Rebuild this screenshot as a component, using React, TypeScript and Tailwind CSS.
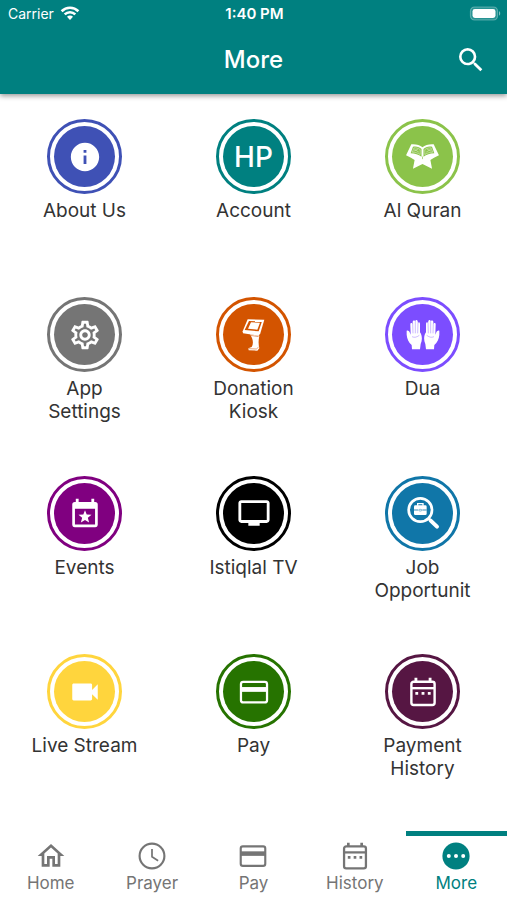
import * as React from "react"
import clsx from "clsx"
import { MdInfo, MdOutlineHome, MdOutlineSettings, MdOutlineTv, MdSearch, MdVideocam } from "react-icons/md"

interface MenuItem {
  id: string
  label: string
  ring: string
  fill: string
  icon: React.ReactNode
}

interface TabItem {
  id: string
  label: string
  icon: React.ReactNode
}

const WifiIcon = () => (
  <svg className="h-4 w-5" viewBox="0 0 20 16" fill="none" stroke="currentColor" strokeWidth="2.6">
    <path d="M1.6 5.2a12 12 0 0 1 16.800 0" />
    <path d="M4.700 8.400a7.600 7.600 0 0 1 10.600 0" />
    <path d="M10 14l-3-3.200a4.200 4.200 0 0 1 6 0z" fill="currentColor" stroke="none" />
  </svg>
)

const BatteryIcon = () => (
  <svg className="h-4 w-8" viewBox="0 0 32 16">
    <rect x="1.5" y="1" width="27" height="13" rx="4" fill="#fff" fillOpacity=".15" stroke="#fff" strokeOpacity=".3" strokeWidth="1.2" />
    <rect x="3.5" y="3" width="23" height="9" rx="2.4" fill="#fff" />
    <path d="M30 5.3c1.6.4 1.6 4 0 4.4z" fill="#fff" fillOpacity=".5" />
  </svg>
)

const QuranIcon = () => (
  <svg className="h-[25px] w-[33px]" viewBox="0 0 100 76">
    <path
      fill="#fff"
      d="M16 1C30 0 42 3 50 10C58 3 70 0 84 1L100 34L85 42L74 49L79 75L50 61L21 75L26 49L15 42L0 34Z"
    />
    <path fill="#8bc34a" d="M21 8C32 6 41 9 47 15V39C38 32 27 28 14 28Z" />
    <path fill="#8bc34a" d="M79 8C68 6 59 9 53 15V39C62 32 73 28 86 28Z" />
    <g fill="none" stroke="#fff" strokeWidth="2" strokeOpacity=".6">
      <path d="M24 12C31 11 37 13 43 17V32C36 27 28 25 19 25Z" />
      <path d="M76 12C69 11 63 13 57 17V32C64 27 72 25 81 25Z" />
      <path d="M25 16l14 9M23 22l14-7M75 16l-14 9M77 22l-14-7" />
    </g>
    <path fill="none" stroke="#8bc34a" strokeWidth="2" d="M50 38v8" />
  </svg>
)

const KioskIcon = () => (
  <svg className="h-8 w-6" viewBox="0 0 72 96">
    <path fill="#fff" d="M17 1L67 2L55 43L50 50L3 43L2 37Z" />
    <path fill="#d35400" d="M21 6L60 7L50 37L8 33Z" />
    <path fill="#fff" d="M27 10L54 11L46 32L18 29Z" />
    <path
      fill="#fff"
      d="M24 46L52 50C49 64 49 76 52 88L46 95L20 94L19 88L29 84C35 74 34 61 24 46Z"
    />
    <path fill="none" stroke="#d35400" strokeWidth="1.6" d="M25 49L50 53M20 89L43 90L50 84" />
  </svg>
)

const Hand = () => (
  <>
    <path
      fill="#fff"
      d="M2 32C5 30 9 32 11 37L14 44L13 13C13 8 19 8 20 13L20 5C21 0 27 0 28 5L28 3C29-1 34-1 35 4L36 9C38 5 42 7 42 12L42 37C48 45 50 59 44 72L42 88H18L17 75C8 68 3 56 2 44Z"
    />
    <path
      fill="none"
      stroke="#7c4dff"
      strokeOpacity=".7"
      strokeWidth="1.6"
      d="M20 10L21 40M28 4V40M36 8L35 40M18 50C26 54 33 51 40 46"
    />
  </>
)

const HandsIcon = () => (
  <svg className="h-[30px] w-[34px]" viewBox="0 0 102 90">
    <Hand />
    <g transform="matrix(-1 0 0 1 102 0)">
      <Hand />
    </g>
  </svg>
)

const CalendarStarIcon = () => (
  <svg className="size-[34px]" viewBox="0 0 24 24" fill="currentColor">
    <path
      fillRule="evenodd"
      d="M5.500 2h2v2.200h9V2h2v2.200h.700A1.800 1.800 0 0 1 21 6v14.200a1.800 1.800 0 0 1-1.800 1.800H4.800A1.800 1.800 0 0 1 3 20.200V6a1.800 1.800 0 0 1 1.800-1.800h.700zM4.900 9v11.200h14.200V9z"
    />
    <path d="M12 10l1.200 3.100 3.400.2-2.600 2.100.9 3.300-2.900-1.800-2.900 1.800.9-3.300-2.600-2.100 3.400-.2z" />
  </svg>
)

const CalendarDotsIcon = ({ className }: { className?: string }) => (
  <svg className={className} viewBox="0 0 24 24" fill="none" stroke="currentColor">
    <rect x="3.800" y="4.800" width="16.400" height="16.400" rx="1.600" strokeWidth="1.700" />
    <path d="M7 2v3M17 2v3" strokeWidth="2" />
    <path d="M3.700 9.300h16.600" strokeWidth="1.700" />
    <path d="M6.600 13h2M11 13h2M15.400 13h2" strokeWidth="2" />
  </svg>
)

const CardIcon = ({ className }: { className?: string }) => (
  <svg className={className} viewBox="0 0 24 24" fill="none" stroke="currentColor">
    <rect x="2.800" y="4.800" width="18.400" height="14.600" rx="1.600" strokeWidth="1.600" />
    <path d="M2.800 10.200h18.400" strokeWidth="3.400" />
  </svg>
)

const ClockIcon = ({ className }: { className?: string }) => (
  <svg className={className} viewBox="0 0 24 24" fill="none" stroke="currentColor">
    <circle cx="12" cy="12" r="9.300" strokeWidth="1.600" />
    <path d="M12 6.800v5.800l4.600 2.900" strokeWidth="1.300" />
  </svg>
)

const JobSearchIcon = () => (
  <svg className="size-[34px]" viewBox="0 0 102 102">
    <circle cx="43" cy="42" r="35" fill="none" stroke="#fff" strokeWidth="8" />
    <path d="M66 66L74 74" stroke="#fff" strokeWidth="8" />
    <path d="M74 74L93 92" stroke="#fff" strokeWidth="12" strokeLinecap="round" />
    <path fill="none" stroke="#fff" strokeWidth="4" d="M35 29V23H51V29" />
    <rect x="24" y="28" width="38" height="29" rx="4" fill="#fff" />
    <path fill="none" stroke="#1076a8" strokeWidth="2.500" d="M24 42H37M49 42H62" />
    <rect x="39" y="40" width="8" height="5" rx="2" fill="#fff" stroke="#1076a8" strokeWidth="1.500" />
  </svg>
)

const MoreIcon = () => (
  <svg className="size-8" viewBox="0 0 24 24">
    <circle cx="12" cy="12" r="10.200" fill="currentColor" />
    <g fill="#fff">
      <circle cx="6.600" cy="12" r="1.500" />
      <circle cx="12" cy="12" r="1.500" />
      <circle cx="17.400" cy="12" r="1.500" />
    </g>
  </svg>
)

const menuItems: MenuItem[] = [
  { id: "about", label: "About Us", ring: "border-[#3f51b5]", fill: "bg-[#3f51b5]", icon: <MdInfo className="size-[34px]" /> },
  {
    id: "account",
    label: "Account",
    ring: "border-[#008080]",
    fill: "bg-[#008080]",
    icon: <span className="text-[28px] leading-7 font-medium">HP</span>,
  },
  { id: "quran", label: "Al Quran", ring: "border-[#8bc34a]", fill: "bg-[#8bc34a]", icon: <QuranIcon /> },
  {
    id: "settings",
    label: "App Settings",
    ring: "border-[#757575]",
    fill: "bg-[#757575]",
    icon: <MdOutlineSettings className="size-[34px]" />,
  },
  { id: "donation", label: "Donation Kiosk", ring: "border-[#d35400]", fill: "bg-[#d35400]", icon: <KioskIcon /> },
  { id: "dua", label: "Dua", ring: "border-[#7c4dff]", fill: "bg-[#7c4dff]", icon: <HandsIcon /> },
  { id: "events", label: "Events", ring: "border-[#800080]", fill: "bg-[#800080]", icon: <CalendarStarIcon /> },
  { id: "tv", label: "Istiqlal TV", ring: "border-black", fill: "bg-black", icon: <MdOutlineTv className="size-[34px]" /> },
  { id: "jobs", label: "Job Opportunit", ring: "border-[#1076a8]", fill: "bg-[#1076a8]", icon: <JobSearchIcon /> },
  { id: "live", label: "Live Stream", ring: "border-[#ffd53d]", fill: "bg-[#ffd53d]", icon: <MdVideocam className="size-[34px]" /> },
  { id: "pay", label: "Pay", ring: "border-[#267300]", fill: "bg-[#267300]", icon: <CardIcon className="size-[34px]" /> },
  {
    id: "payment-history",
    label: "Payment History",
    ring: "border-[#561643]",
    fill: "bg-[#561643]",
    icon: <CalendarDotsIcon className="size-[34px]" />,
  },
]

const tabs: TabItem[] = [
  { id: "home", label: "Home", icon: <MdOutlineHome className="size-8" /> },
  { id: "prayer", label: "Prayer", icon: <ClockIcon className="size-8" /> },
  { id: "pay", label: "Pay", icon: <CardIcon className="size-8" /> },
  { id: "history", label: "History", icon: <CalendarDotsIcon className="size-8" /> },
  { id: "more", label: "More", icon: <MoreIcon /> },
]

const Header = () => (
  <header className="bg-[#008080] text-white shadow-[0_2px_5px_rgba(0,0,0,0.4)]">
    {/* Status bar */}
    <div className="grid h-7 grid-cols-3 items-center pr-1.5 pl-2">
      <div className="flex items-center gap-1.5">
        <span className="text-sm">Carrier</span>
        <WifiIcon />
      </div>
      <span className="text-center text-[15px] leading-5 font-semibold">1:40 PM</span>
      <div className="flex justify-end">
        <BatteryIcon />
      </div>
    </div>

    {/* Title bar */}
    <div className="grid h-[66px] grid-cols-3 items-center px-5 pb-0.5">
      <h1 className="col-start-2 text-center text-2xl font-medium">More</h1>
      <button type="button" aria-label="Search" className="justify-self-end">
        <MdSearch className="size-8" />
      </button>
    </div>
  </header>
)

const MenuTile = ({ item }: { item: MenuItem }) => (
  <button type="button" className="flex aspect-[18/19] flex-col items-center px-[30px] pt-[25px]">
    <span className={clsx("flex size-[75px] shrink-0 rounded-full border-3 p-1", item.ring)}>
      <span className={clsx("flex flex-1 items-center justify-center rounded-full text-white", item.fill)}>
        {item.icon}
      </span>
    </span>
    <span className="mt-[5px] text-center text-[19px] leading-[23px] text-[#333333]">{item.label}</span>
  </button>
)

export default function App() {
  const [active, setActive] = React.useState("more")

  return (
    <div className="flex min-h-screen flex-col bg-white font-['Inter',sans-serif]">
      <Header />

      <main className="grid flex-1 grid-cols-3 content-start">
        {menuItems.map((item) => (
          <MenuTile key={item.id} item={item} />
        ))}
      </main>

      <nav className="sticky bottom-0 grid grid-cols-5 bg-white">
        {tabs.map((tab) => (
          <button
            key={tab.id}
            type="button"
            onClick={() => setActive(tab.id)}
            className={clsx(
              "flex flex-col items-center border-t-5 pt-1 pb-1.5",
              active === tab.id ? "border-[#008080] text-[#008080]" : "border-transparent text-[#757575]"
            )}
          >
            {tab.icon}
            <span className="text-[17px] leading-[22px]">{tab.label}</span>
          </button>
        ))}
      </nav>
    </div>
  )
}
